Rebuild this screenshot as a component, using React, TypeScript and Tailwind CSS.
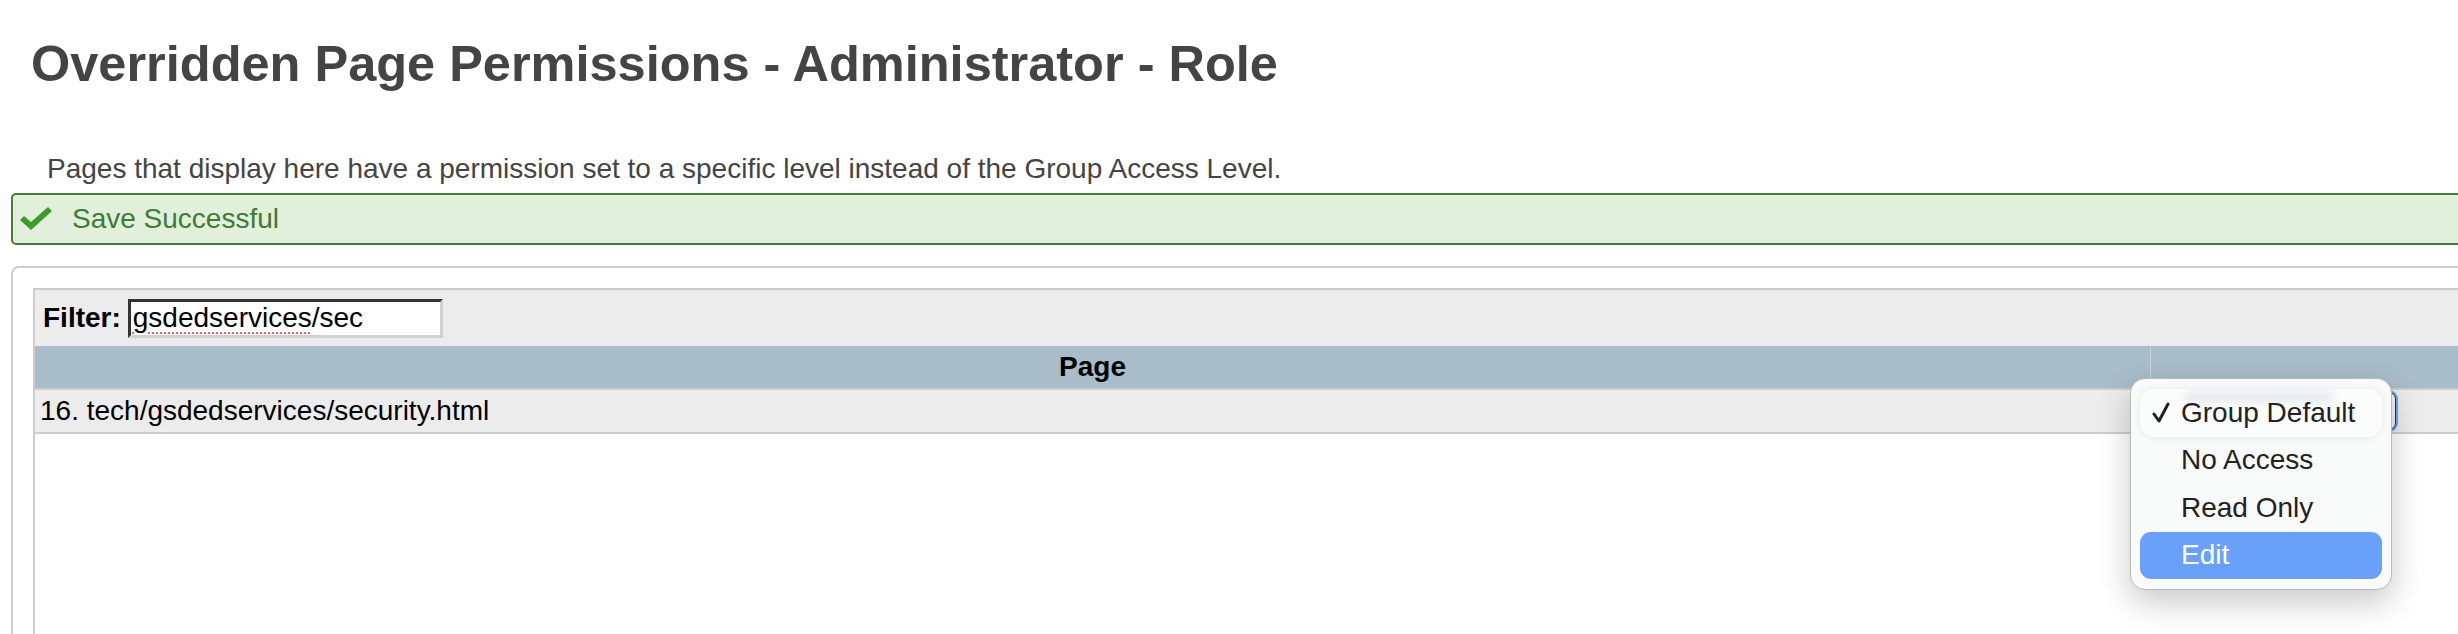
import React from "react";

export default function App() {
  return (
    <div
      className="relative w-[2458px] h-[634px] overflow-hidden bg-white"
      style={{ fontFamily: '"Liberation Sans", Arial, Helvetica, sans-serif' }}
    >
      <div className="w-[2800px]">
        <h1 className="pl-[31px] pt-[39px] text-[50.5px] leading-[50px] font-bold text-[#444]">
          Overridden Page Permissions - Administrator - Role
        </h1>
        <p className="pl-[47px] mt-[66px] text-[28px] leading-[28px] text-[#444]">
          Pages that display here have a permission set to a specific level instead of the Group Access Level.
        </p>
        <div className="ml-[11px] mt-[10px] h-[52px] border-2 border-[#4b7a3f] rounded-[5px] bg-[#e1efdb] flex items-center">
          <svg width="32" height="24" viewBox="0 0 32 24" className="ml-[7px]">
            <polygon points="0,13 4,9 11,15 28,0 32,4 11,23" fill="#3d9a2b" />
          </svg>
          <span className="ml-[20px] text-[28px] leading-[28px] text-[#3f7a37]">Save Successful</span>
        </div>
        <div className="ml-[11px] mt-[21px] border-2 border-[#ccc] rounded-[8px] pt-[20px] pl-[20px] h-[500px]">
          <div className="border-l-2 border-t-2 border-[#ccc] h-full">
            <div className="h-[56px] bg-[#ececec] flex items-center pl-[8px]">
              <span className="text-[28px] leading-[28px] font-bold text-black">Filter:</span>
              <div className="ml-[7px] w-[315px] h-[39px] bg-white border-[3px] border-t-[#333] border-l-[#333] border-b-[#d0d0d0] border-r-[#d0d0d0] flex items-center pl-[2px]">
                <span className="text-[28px] leading-[30px] text-black">
                  <span className="underline decoration-dotted decoration-[#f06060] decoration-2 underline-offset-[5px]">gsdedservices</span>
                  /sec
                </span>
              </div>
            </div>
            <div className="grid grid-cols-[2115px_1fr] h-[44px] bg-[#a8bcc9] border-b-2 border-[#ccc]">
              <div className="flex items-center justify-center text-[28px] leading-[28px] font-bold text-black">Page</div>
              <div className="border-l border-[#c9d3da]"></div>
            </div>
            <div className="grid grid-cols-[2115px_1fr] h-[44px] bg-[#ececec] border-b-2 border-[#ccc]">
              <div className="flex items-center pl-[5px] text-[28px] leading-[28px] text-black">
                16. tech/gsdedservices/security.html
              </div>
              <div className="border-l border-[#d8d8d8] flex items-center pl-[8px]">
                <div className="w-[237px] h-[38px] rounded-[7px] border border-[#333] bg-[#f4f4f4] ring-2 ring-[#6aa6ee]"></div>
              </div>
            </div>
          </div>
        </div>
      </div>

      <div className="absolute left-[2130px] top-[378px] w-[262px] h-[212px] rounded-[15px] border border-[#b9b9b9] bg-[#f9fafa] shadow-[0_12px_32px_rgba(0,0,0,0.22)] pt-[10px] px-[9px] pb-[10px] flex flex-col">
        <div className="relative h-[48px] flex items-center rounded-[14px] overflow-hidden shadow-[0_0_8px_rgba(0,0,0,0.08)] bg-[#fbfcfc]">
          <div className="absolute left-[44px] top-[2px] w-[150px] h-[12px] rounded-full bg-[#e9ecee] blur-[3px]"></div>
          <svg width="18" height="22" viewBox="0 0 18 22" className="ml-[12px] relative">
            <polyline points="2,12 7,19 16,2" fill="none" stroke="#222" strokeWidth="3" strokeLinecap="round" strokeLinejoin="round" />
          </svg>
          <span className="relative ml-[11px] text-[28px] leading-[28px] text-[#222]">Group Default</span>
        </div>
        <div className="h-[48px] flex items-center pl-[41px] text-[28px] leading-[28px] text-[#222]">No Access</div>
        <div className="h-[48px] flex items-center pl-[41px] text-[28px] leading-[28px] text-[#222]">Read Only</div>
        <div className="h-[48px] flex items-center pl-[41px] rounded-[11px] bg-[#69a0f9] text-[28px] leading-[28px] text-white">Edit</div>
      </div>
    </div>
  );
}
